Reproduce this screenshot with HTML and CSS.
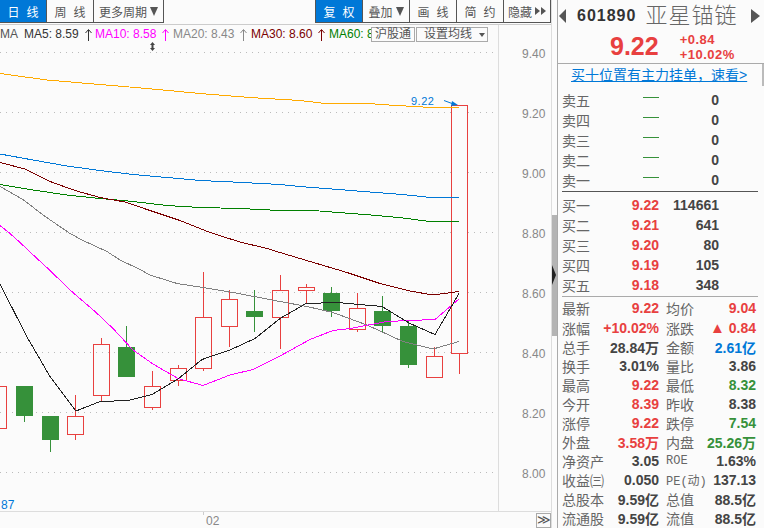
FILE: index.html
```html
<!DOCTYPE html>
<html lang="zh">
<head>
<meta charset="utf-8">
<title>601890 亚星锚链</title>
<link rel="stylesheet" href="styles.css">
</head>
<body>
<div class="app">
  <main class="main">
    <nav class="toolbar">
      <div class="tabs">
        <span class="tab wide active">日线</span>
        <span class="tab wide">周线</span>
        <span class="tab more">更多周期<i class="caret"></i></span>
      </div>
      <div class="tabs">
        <span class="tab wide active">复权</span>
        <span class="tab more short">叠加<i class="caret"></i></span>
        <span class="tab wide">画线</span>
        <span class="tab wide">简约</span>
        <span class="tab more short">隐藏<i class="dbl"></i><i class="dbl"></i></span>
      </div>
    </nav>
    <section class="chart">
      <div class="legend">
        <div class="ma-list">
          <span class="c-name">MA</span>
          <span class="c-ma5">MA5: 8.59<svg class="up-arrow" width="7" height="12" viewBox="0 0 7 12"><path d="M3.5 12V1M0.5 4L3.5 0.5L6.5 4"/></svg></span>
          <span class="c-ma10">MA10: 8.58<svg class="up-arrow" width="7" height="12" viewBox="0 0 7 12"><path d="M3.5 12V1M0.5 4L3.5 0.5L6.5 4"/></svg></span>
          <span class="c-ma20">MA20: 8.43<svg class="up-arrow" width="7" height="12" viewBox="0 0 7 12"><path d="M3.5 12V1M0.5 4L3.5 0.5L6.5 4"/></svg></span>
          <span class="c-ma30">MA30: 8.60<svg class="up-arrow" width="7" height="12" viewBox="0 0 7 12"><path d="M3.5 12V1M0.5 4L3.5 0.5L6.5 4"/></svg></span>
          <span class="c-ma60">MA60: 8</span>
        </div>
        <span class="lbtn">沪股通</span>
        <span class="lbtn set">设置均线<i class="mini"></i></span>
      </div>
      <svg class="plot" width="551" height="486" viewBox="0 25 551 486" xmlns="http://www.w3.org/2000/svg">
        <g class="grid">
          <path d="M0 52.5H498M0 112.5H498M0 172.5H498M0 232.5H498M0 292.5H498M0 352.5H498M0 412.5H498M0 472.5H498"/>
        </g>
        <path class="axis" d="M498.5 24V511"/>
        <g class="ticks">
          <text x="522" y="58">9.40</text>
          <text x="522" y="118">9.20</text>
          <text x="522" y="178">9.00</text>
          <text x="522" y="238">8.80</text>
          <text x="522" y="298">8.60</text>
          <text x="522" y="358">8.40</text>
          <text x="522" y="418">8.20</text>
          <text x="522" y="478">8.00</text>
        </g>
        <g class="up">
          <path d="M-10 386.5H6V428.5H-10Z"/>
          <path d="M75.5 395V416.5M75.5 434.5V440M67.5 416.5H83.5V434.5H67.5Z"/>
          <path d="M101.5 338V344.5M101.5 395.5V401M93.5 344.5H109.5V395.5H93.5Z"/>
          <path d="M152.5 371V386.5M152.5 407.5V410M144.5 386.5H160.5V407.5H144.5Z"/>
          <path d="M178.5 365V368.5M178.5 380.5V386M170.5 368.5H186.5V380.5H170.5Z"/>
          <path d="M203.5 272V317.5M203.5 368.5V371M195.5 317.5H211.5V368.5H195.5Z"/>
          <path d="M229.5 290V299.5M229.5 326.5V347M221.5 299.5H237.5V326.5H221.5Z"/>
          <path d="M280.5 275V290.5M280.5 317.5V349M272.5 290.5H288.5V317.5H272.5Z"/>
          <path d="M306.5 284V287.5M306.5 290.5V303M298.5 287.5H314.5V290.5H298.5Z"/>
          <path d="M357.5 293V308.5M357.5 329.5V332M349.5 308.5H365.5V329.5H349.5Z"/>
          <path d="M434.5 347V356.5M426.5 356.5H442.5V377.5H426.5Z"/>
          <path d="M459.5 353.5V374M451.5 105.5H467.5V353.5H451.5Z"/>
        </g>
        <g class="down">
          <path class="wick" d="M24.5 416V422"/><rect x="16" y="386" width="17" height="30"/>
          <path class="wick" d="M50.5 440V452"/><rect x="42" y="416" width="17" height="24"/>
          <path class="wick" d="M126.5 326V347"/><rect x="118" y="347" width="17" height="30"/>
          <path class="wick" d="M254.5 290V332"/><rect x="246" y="311" width="17" height="6"/>
          <path class="wick" d="M331.5 287V317"/><rect x="323" y="293" width="17" height="18"/>
          <path class="wick" d="M382.5 296V332"/><rect x="374" y="311" width="17" height="15"/>
          <path class="wick" d="M408.5 321V368"/><rect x="400" y="326" width="17" height="39"/>
        </g>
        <polyline class="l orange" points="0,73.5 47,80 100,84.5 147,88.5 200,93.5 250,97.5 300,100.5 325,103.5 370,103.5 380,104.5 397,105.5 415,106.5 430,107.5 459,107.5"/>
        <polyline class="l blue" points="0,154 33,160 67,166 100,170.5 133,174.5 167,177.5 200,180.5 233,182 280,184.5 300,186.5 325,188.5 351,190.5 376,192.5 402,194.5 422,196.5 430,197.5 459,197.5"/>
        <polyline class="l green" points="0,184.5 33,190 67,195 100,198.5 133,201.5 167,205.5 200,207.5 240,208.5 280,210.5 313,210.5 345,213 377,215.5 403,218 422,220.5 430,221.5 459,221.5"/>
        <polyline class="l maroon" points="0,162.5 25,169 50,181.5 75,190.5 100,197.5 125,202 150,210.5 180,220.5 210,232.5 240,242 267,248.5 280,252.5 305,260 347,272.5 380,283.5 410,291 433,295 459,291.5"/>
        <polyline class="l gray" points="0,186.5 23,199.5 43,215 70,233.5 83,240.5 107,251.5 120,260 140,269.5 150,275 177,283.5 203,287.5 233,292.5 280,301.5 307,306.5 333,312.5 367,325 403,341.5 433,349 459,341.5"/>
        <polyline class="l magenta" points="0,225.5 10,233.5 20,242.5 37,258.5 49,269.5 70,290 95,311.5 113,328.5 133,350 153,364 178,378.5 203,385.5 230,375 253,369.5 280,356 310,339.5 333,330.5 350,328.5 387,321.5 410,320.5 435,319.5 459,299"/>
        <polyline class="l black" points="0,284 27,337 50,376.5 76,411 100,401.5 128,400.5 152,394.5 178,379 202,359.5 230,350 255,338.5 280,318.5 306,303.5 337,302.5 382,306.5 410,323.5 435,334.5 459,293.5"/>
        <text class="tag" x="411" y="105">9.22</text>
        <path class="tag-line" d="M444 100.5L452 103.5"/>
        <path class="tag-head" d="M452 101L458 105L451 106Z"/>
        <path class="cursor" d="M152.5 42L155 45H153.5V48H155L152.5 51L150 48H151.5V45H150Z"/>
        <text class="vol" x="1" y="509">87</text>
      </svg>
      <div class="dateline">
        <i class="date-tick"></i>
        <span class="date">02</span>
        <span class="next">≫</span>
      </div>
    </section>
  </main>
  <div class="scroll"><div class="thumb"><i class="grip"></i></div></div>
  <aside class="side">
    <header class="title">
      <i class="arrow left"></i>
      <span class="code">601890</span>
      <span class="name">亚星锚链</span>
      <i class="arrow right"></i>
    </header>
    <div class="quote">
      <span class="price">9.22</span>
      <div class="change"><span>+0.84</span><span>+10.02%</span></div>
    </div>
    <a class="promo">买十位置有主力挂单，速看&gt;</a>
    <div class="book sell">
      <div class="row"><span>卖五</span><em class="dash"></em><b>0</b></div>
      <div class="row"><span>卖四</span><em class="dash"></em><b>0</b></div>
      <div class="row"><span>卖三</span><em class="dash"></em><b>0</b></div>
      <div class="row"><span>卖二</span><em class="dash"></em><b>0</b></div>
      <div class="row"><span>卖一</span><em class="dash"></em><b>0</b></div>
    </div>
    <div class="book buy">
      <div class="row"><span>买一</span><em class="r">9.22</em><b>114661</b></div>
      <div class="row"><span>买二</span><em class="r">9.21</em><b>641</b></div>
      <div class="row"><span>买三</span><em class="r">9.20</em><b>80</b></div>
      <div class="row"><span>买四</span><em class="r">9.19</em><b>105</b></div>
      <div class="row"><span>买五</span><em class="r">9.18</em><b>348</b></div>
    </div>
    <div class="stats">
      <div class="cell"><span>最新</span><b class="r">9.22</b></div>
      <div class="cell"><span>均价</span><b class="r">9.04</b></div>
      <div class="cell"><span>涨幅</span><b class="r">+10.02%</b></div>
      <div class="cell"><span>涨跌</span><b class="r"><i class="tri">▲</i> 0.84</b></div>
      <div class="cell"><span>总手</span><b>28.84万</b></div>
      <div class="cell"><span>金额</span><b class="bl">2.61亿</b></div>
      <div class="cell"><span>换手</span><b>3.01%</b></div>
      <div class="cell"><span>量比</span><b>3.86</b></div>
      <div class="cell"><span>最高</span><b class="r">9.22</b></div>
      <div class="cell"><span>最低</span><b class="g">8.32</b></div>
      <div class="cell"><span>今开</span><b class="r">8.39</b></div>
      <div class="cell"><span>昨收</span><b>8.38</b></div>
      <div class="cell"><span>涨停</span><b class="r">9.22</b></div>
      <div class="cell"><span>跌停</span><b class="g">7.54</b></div>
      <div class="cell"><span>外盘</span><b class="r">3.58万</b></div>
      <div class="cell"><span>内盘</span><b class="g">25.26万</b></div>
      <div class="cell"><span>净资产</span><b>3.05</b></div>
      <div class="cell"><span class="mono">ROE</span><b>1.63%</b></div>
      <div class="cell"><span>收益㈢</span><b>0.050</b></div>
      <div class="cell"><span class="mono">PE(动)</span><b>137.13</b></div>
      <div class="cell"><span>总股本</span><b>9.59亿</b></div>
      <div class="cell"><span>总值</span><b>88.5亿</b></div>
      <div class="cell"><span>流通股</span><b>9.59亿</b></div>
      <div class="cell"><span>流值</span><b>88.5亿</b></div>
    </div>
  </aside>
</div>
</body>
</html>
```
FILE: styles.css
```css
* { box-sizing: border-box; }
html, body { margin: 0; padding: 0; }
body {
  width: 764px;
  height: 528px;
  overflow: hidden;
  background: #fbfbfb;
  font-family: "Liberation Sans", "Noto Sans CJK SC", sans-serif;
  color: #444;
}
.app { display: flex; width: 764px; height: 528px; }

/* left column */
.main { width: 552px; flex: none; display: flex; flex-direction: column; border-right: 1px solid #ddd; }
.toolbar {
  height: 25px;
  flex: none;
  display: flex;
  justify-content: space-between;
  padding-bottom: 2px;
  border-bottom: 1px solid #ccc;
}
.tabs { display: flex; }
.tab {
  height: 23px;
  display: flex;
  align-items: center;
  justify-content: center;
  font-size: 12px;
  color: #555;
  background: #fbfbfb;
  border-right: 1px solid #555;
  border-bottom: 1px solid #555;
}
.tabs:last-child .tab:first-child { border-left: 1px solid #555; }
.wide { width: 47px; letter-spacing: 7px; padding-left: 7px; }
.tabs:last-child .wide:first-child { width: 48px; }
.more { width: 70px; }
.short { width: 47px; }
.tab.active { background: #0078d7; color: #fff; }
.caret {
  width: 0; height: 0; margin-left: 3px;
  border-left: 4px solid transparent;
  border-right: 4px solid transparent;
  border-top: 9px solid #555;
}
.dbl {
  width: 0; height: 0; margin-left: 1px;
  border-top: 4px solid transparent;
  border-bottom: 4px solid transparent;
  border-left: 5px solid #555;
}
.dbl:nth-of-type(1) { margin-left: 3px; }

/* chart */
.chart { position: relative; flex: 1; display: flex; flex-direction: column; min-height: 0; }
.plot { display: block; flex: none; }
.legend {
  position: absolute;
  left: 0; top: 1px;
  width: 490px;
  height: 17px;
  display: flex;
  align-items: center;
  font-size: 12px;
  line-height: 15px;
}
.ma-list { width: 371px; flex: none; display: flex; overflow: hidden; white-space: nowrap; }
.ma-list span { flex: none; width: 78px; display: flex; align-items: center; }
.ma-list .c-name { width: 24px; color: #555; }
.ma-list .c-ma5 { width: 71px; }
.up-arrow { margin-left: 6px; flex: none; }
.up-arrow path { fill: none; stroke: currentColor; stroke-width: 1; }
.c-ma5 { color: #333; }
.c-ma10 { color: #ff00ff; }
.c-ma20 { color: #888; }
.c-ma30 { color: #7a0000; }
.c-ma60 { color: #008000; }
.lbtn {
  height: 15px;
  flex: none;
  padding: 0 3px;
  border: 1px solid #aaa;
  font-size: 12px;
  line-height: 13px;
  color: #555;
  background: #fbfbfb;
  white-space: nowrap;
}
.set { margin-left: 1px; width: 72px; padding-left: 7px; display: flex; align-items: center; }
.mini {
  width: 0; height: 0; margin-left: 7px;
  border-left: 3px solid transparent;
  border-right: 3px solid transparent;
  border-top: 4px solid #555;
}
.grid path { fill: none; stroke: #bbb; stroke-width: 1; stroke-dasharray: 1 5; }
.axis { fill: none; stroke: #ddd; stroke-width: 1; }
.ticks text { font-size: 12px; fill: #888; font-family: "Liberation Sans", sans-serif; }
.up path { fill: none; stroke: #e8403f; stroke-width: 1; shape-rendering: crispEdges; }
.up path:last-child { fill: #fbfbfb; }
.down rect { fill: #36913a; }
.wick { fill: none; stroke: #36913a; stroke-width: 1; shape-rendering: crispEdges; }
.l { fill: none; stroke-width: 1; shape-rendering: crispEdges; }
.orange { stroke: #ffaa00; }
.blue { stroke: #0078d7; }
.green { stroke: #008000; }
.maroon { stroke: #7a0000; }
.gray { stroke: #808080; }
.magenta { stroke: #ff00ff; }
.black { stroke: #222; }
.tag { font-size: 11px; fill: #0078d7; letter-spacing: 0.5px; font-family: "Liberation Sans", sans-serif; }
.tag-line { stroke: #0078d7; fill: none; }
.tag-head { fill: #0078d7; }
.cursor { fill: #444; }
.vol { font-size: 12px; fill: #0078d7; font-family: "Liberation Sans", sans-serif; }
.dateline {
  position: relative;
  flex: 1;
  border-top: 1px solid #ddd;
  display: flex;
  justify-content: flex-end;
  align-items: flex-start;
}
.date-tick { position: absolute; left: 203px; top: 0; width: 1px; height: 3px; background: #ccc; }
.date {
  position: absolute;
  left: 206px; top: 2px;
  font-size: 12px;
  line-height: 14px;
  color: #888;
}
.next {
  width: 15px; height: 15px;
  margin-top: 1px;
  border: 1px solid #aaa;
  font-size: 13px;
  line-height: 12px;
  text-align: center;
  color: #555;
  font-family: "DejaVu Sans", sans-serif;
}

/* scrollbar between chart and quote panel */
.scroll { width: 5px; flex: none; }
.thumb { position: relative; width: 5px; height: 121px; margin-top: 215px; background: #b4b4b4; }
.grip {
  position: absolute;
  left: 0; top: 50px;
  width: 0; height: 0;
  border-top: 10px solid transparent;
  border-bottom: 10px solid transparent;
  border-left: 4px solid #222;
}

/* quote panel */
.side {
  width: 207px;
  flex: none;
  display: flex;
  flex-direction: column;
  border-left: 1px solid #aaa;
}
.title { height: 31px; display: flex; align-items: center; position: relative; padding: 1px 2px 0 1px; }
.arrow {
  width: 0; height: 0;
  border-top: 7px solid transparent;
  border-bottom: 7px solid transparent;
}
.left { border-right: 7px solid #555; }
.right { border-left: 9px solid #555; margin-left: 14px; }
.code { margin-left: 11px; font-size: 16px; font-weight: 700; color: #333; letter-spacing: 1px; }
.name { margin-left: 9px; font-size: 22px; line-height: 28px; color: #666; font-weight: 300; letter-spacing: 1px; }
.quote {
  height: 33px;
  display: flex;
  align-items: center;
  color: #e8403f;
  font-weight: 700;
  padding-left: 52px;
  border-bottom: 1px solid #aaa;
}
.price { font-size: 25px; line-height: 30px; margin-top: -2px; }
.change { margin-left: 21px; display: flex; flex-direction: column; font-size: 13px; line-height: 15px; letter-spacing: 0.5px; }
.promo {
  height: 22px;
  padding-left: 13px;
  font-size: 14px;
  line-height: 23px;
  color: #0078d7;
  text-decoration: underline;
  white-space: nowrap;
  border-right: 2px solid #bbb;
}
.book { margin: 0 6px 0 4px; }
.sell { border-bottom: 1px solid #555; height: 106px; padding-top: 4px; }
.buy { border-bottom: 1px solid #aaa; height: 105px; padding-top: 3px; }
.row { display: flex; align-items: center; height: 20px; font-size: 14px; color: #666; }
.row span { width: 54px; }
.row em { font-style: normal; font-weight: 700; width: 43px; text-align: right; }
.row b { width: 60px; text-align: right; color: #444; }
.dash { display: block; height: 0; width: 16px !important; margin: -5px 0 0 27px; border-top: 1px solid #36913a; }
.r { color: #e8403f !important; }
.g { color: #36913a !important; }
.bl { color: #0078d7 !important; }
.stats {
  margin: 0 6px 0 4px;
  padding-top: 2px;
  display: grid;
  grid-template-columns: 97px 90px;
  column-gap: 7px;
  grid-auto-rows: 19.1px;
}
.cell { display: flex; justify-content: space-between; align-items: center; font-size: 14px; white-space: nowrap; }
.cell span { color: #666; }
.cell b { color: #444; }
.tri { font-style: normal; font-size: 15px; }
.mono { font-family: "Liberation Mono", "Noto Sans CJK SC", monospace; font-size: 12px; }
```
